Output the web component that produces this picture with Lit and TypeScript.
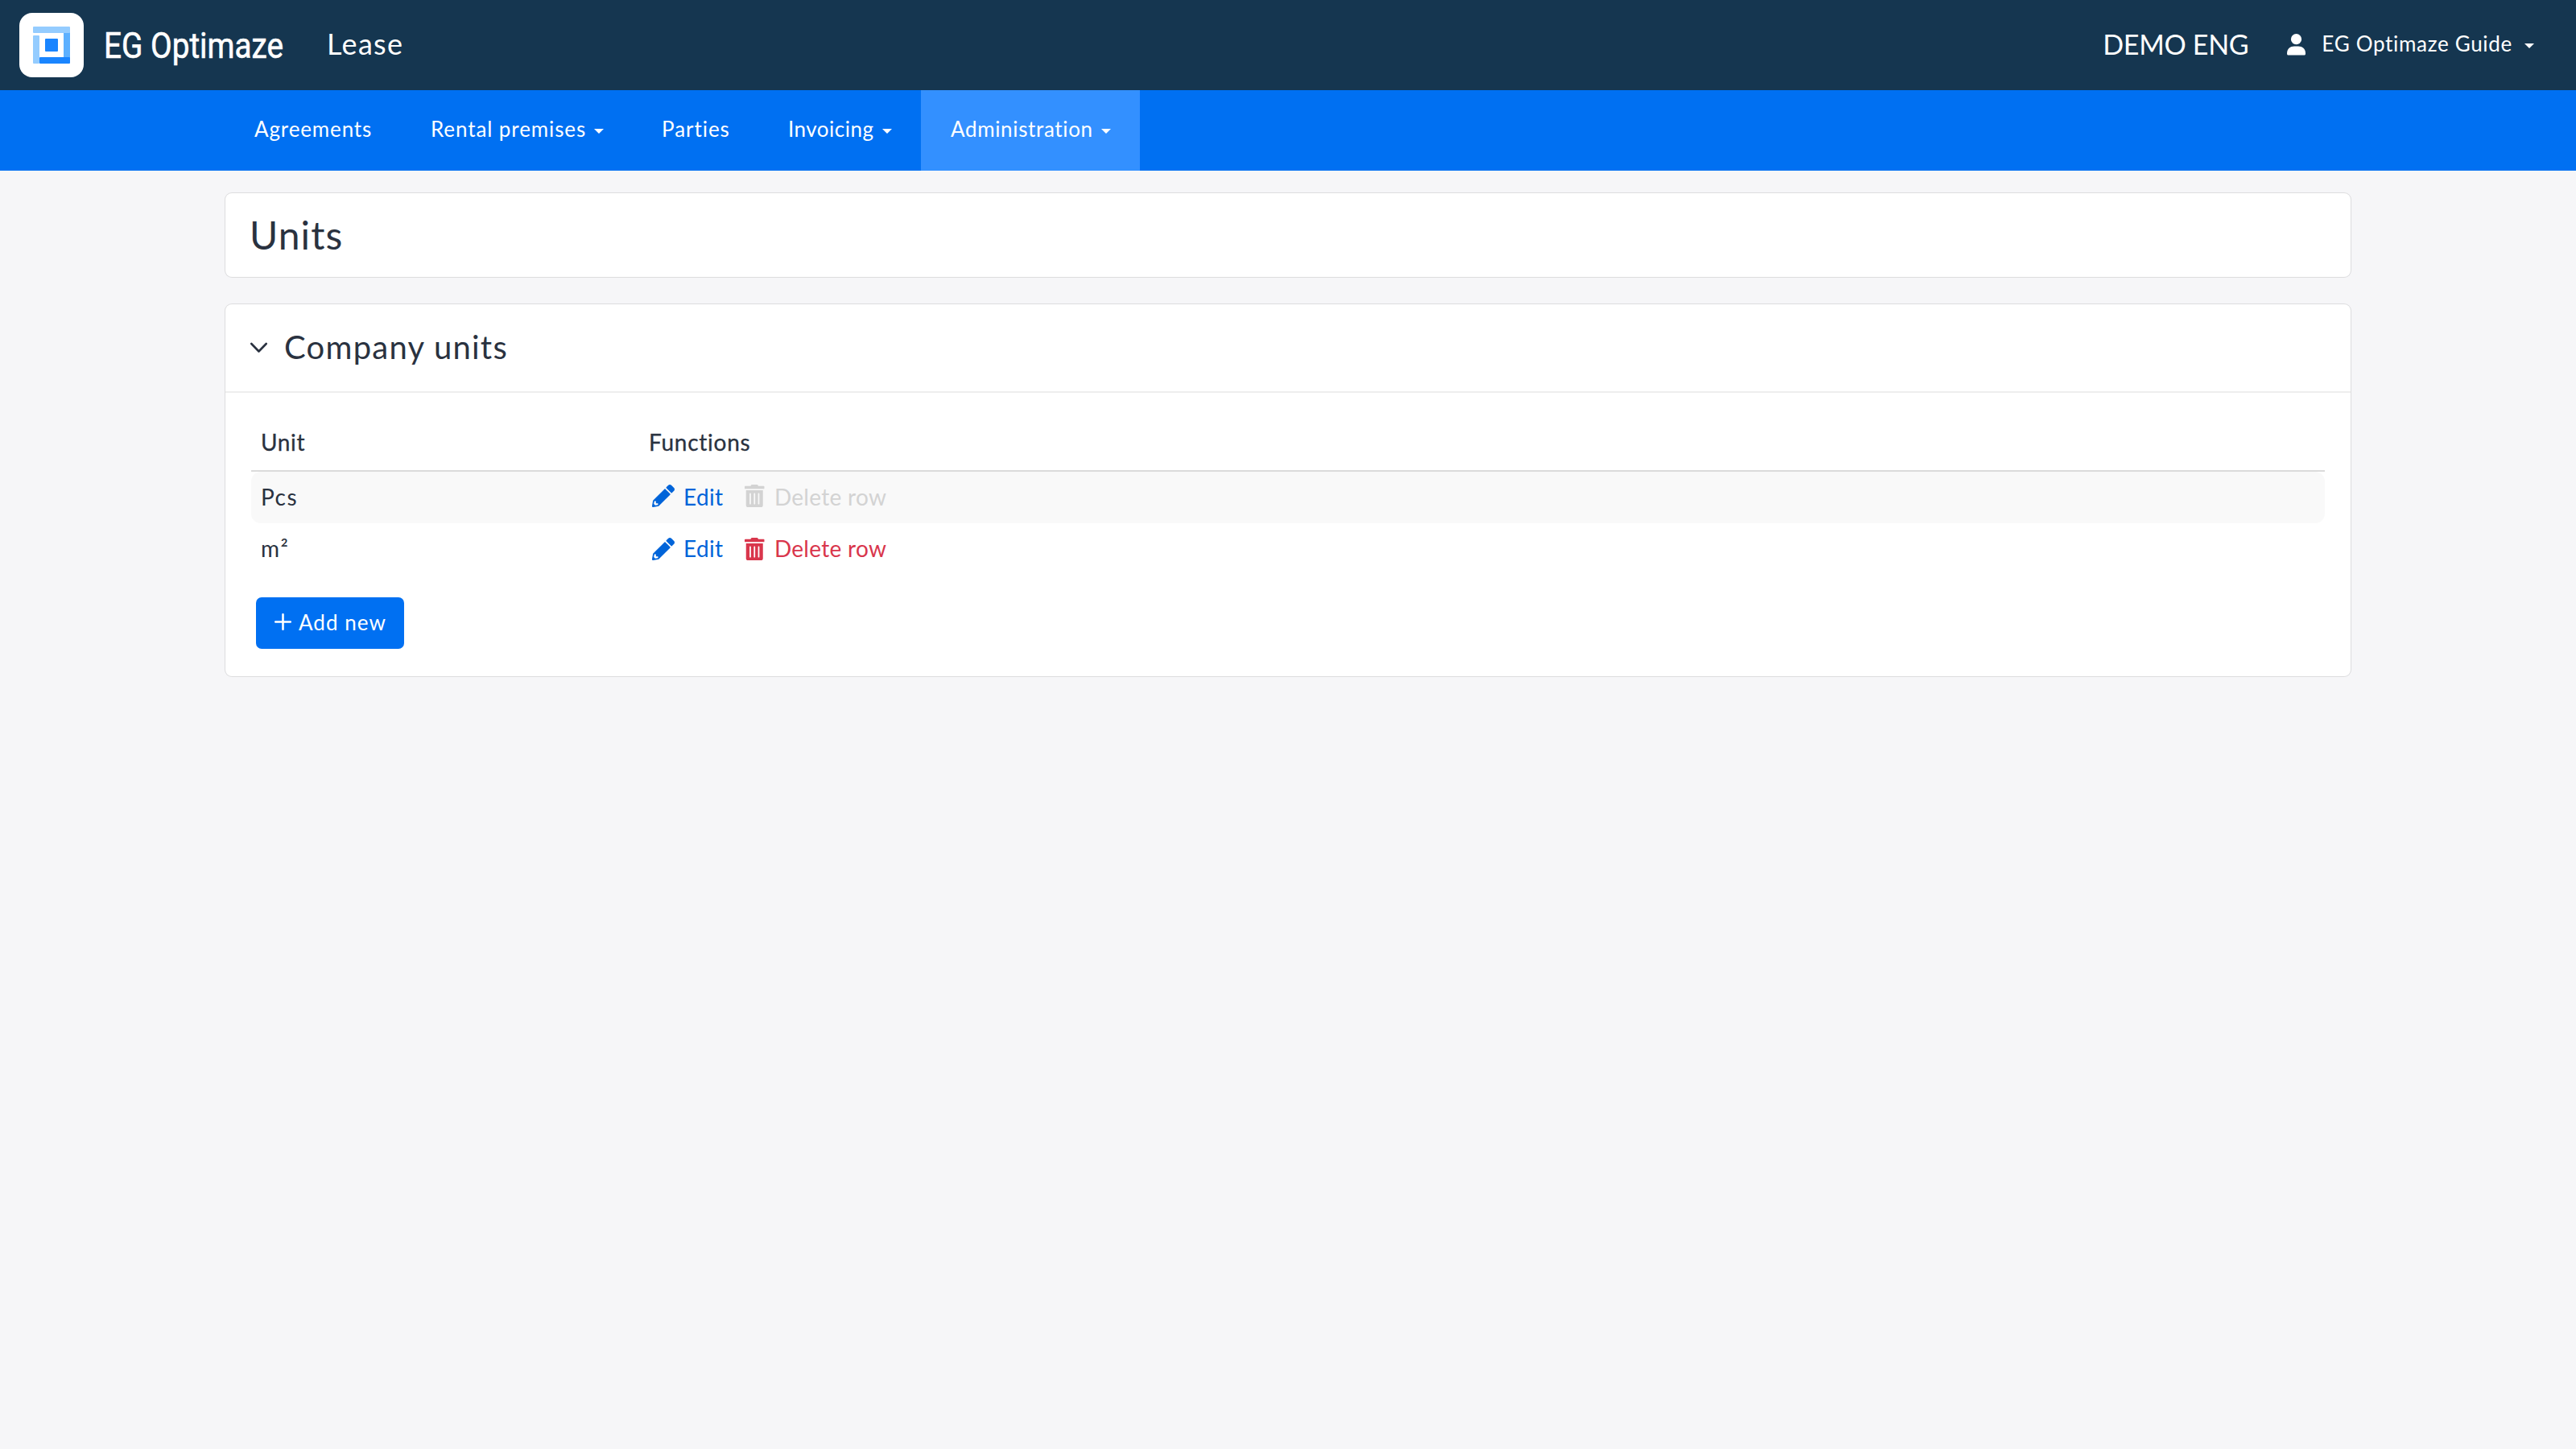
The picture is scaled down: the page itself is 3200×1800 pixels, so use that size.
import { LitElement, html, css, svg, nothing } from "lit";
import { customElement, property, state } from "lit/decorators.js";
import { classMap } from "lit/directives/class-map.js";

interface NavItem {
  id: string;
  label: string;
  menu?: boolean;
  active?: boolean;
}

interface Unit {
  name: string;
  deletable: boolean;
}

const NAV: NavItem[] = [
  { id: "agreements", label: "Agreements" },
  { id: "premises", label: "Rental premises", menu: true },
  { id: "parties", label: "Parties" },
  { id: "invoicing", label: "Invoicing", menu: true },
  { id: "administration", label: "Administration", menu: true, active: true },
];

const UNITS: Unit[] = [
  { name: "Pcs", deletable: false },
  { name: "m²", deletable: true },
];

const pencil = svg`<path fill="currentColor" d="M497.9 142.1l-46.1 46.1c-4.7 4.7-12.3 4.7-17 0l-111-111c-4.7-4.7-4.7-12.3 0-17l46.1-46.1c18.7-18.7 49.1-18.7 67.9 0l60.1 60.1c18.8 18.7 18.8 49.1 0 67.9zM284.2 99.8L21.6 362.4.4 483.9c-2.9 16.4 11.4 30.6 27.8 27.8l121.5-21.3 262.6-262.6c4.7-4.7 4.7-12.3 0-17l-111-111c-4.8-4.7-12.4-4.7-17.1 0zM88 424h48v36.3l-64.5 11.3-31.1-31.1L51.7 376H88v48z"/>`;

const trash = svg`<path fill="currentColor" d="M32 464a48 48 0 0 0 48 48h288a48 48 0 0 0 48-48V128H32zm272-256a16 16 0 0 1 32 0v224a16 16 0 0 1-32 0zm-96 0a16 16 0 0 1 32 0v224a16 16 0 0 1-32 0zm-96 0a16 16 0 0 1 32 0v224a16 16 0 0 1-32 0zM432 32H312l-9.4-18.7A24 24 0 0 0 281.1 0H166.8a23.72 23.72 0 0 0-21.4 13.3L136 32H16A16 16 0 0 0 0 48v32a16 16 0 0 0 16 16h416a16 16 0 0 0 16-16V48a16 16 0 0 0-16-16z"/>`;

@customElement("top-bar")
class TopBar extends LitElement {
  static styles = css`
    :host { display: block; }
    .bar {
      display: flex; align-items: center; box-sizing: border-box; height: 112px;
      padding: 0 52px 0 24px; background: #153650; color: #fff; white-space: nowrap;
    }
    svg { display: block; flex: none; }
    .wordmark {
      margin-left: 20px; overflow: visible; font-family: Roboto, "Liberation Sans", sans-serif;
      font-size: 43.5px; font-weight: 400;
    }
    .module { margin-left: 42px; padding-bottom: 2px; font-size: 36px; letter-spacing: 1.35px; }
    .company { margin-left: auto; padding-bottom: 2px; font-size: 34px; letter-spacing: -0.3px; }
    .person { margin: 0 20px 2px 48px; }
    .user { padding-bottom: 2px; font-size: 26px; letter-spacing: 0.7px; }
    .caret {
      margin: 2px 0 0 15px; border: 6px solid transparent;
      border-top-color: #fff; border-bottom: 0;
    }
  `;
  render() {
    return html`
      <header class="bar">
        <svg width="80" height="80" viewBox="0 0 80 80">
          <rect width="80" height="80" rx="16" fill="#fff" />
          <rect x="17" y="28" width="8" height="35" rx="1" fill="#94ccff" />
          <rect x="55" y="24" width="8" height="32" fill="#5cb0ff" />
          <rect x="17" y="17" width="46" height="8" rx="1" fill="#94ccff" />
          <rect x="25" y="55" width="38" height="8" rx="1" fill="#1a85ff" />
          <rect x="32" y="32" width="16" height="16" rx="1" fill="#1a85ff" />
        </svg>
        <svg class="wordmark" width="240" height="80" viewBox="0 0 240 80">
          <text x="5" y="56" textLength="223" lengthAdjust="spacingAndGlyphs" fill="#fff" stroke="#fff" stroke-width=".6">EG Optimaze</text>
        </svg>
        <span class="module">Lease</span>
        <span class="company">DEMO ENG</span>
        <svg class="person" width="23" height="27" viewBox="0 0 23 27">
          <circle cx="11.5" cy="6.7" r="6.6" fill="#fff" />
          <path fill="#fff" d="M0 24.500C0 18.500 4 15.600 9 15.600h5c5 0 9 2.900 9 8.900 0 1.400-.6 2-1.800 2H1.800C.6 26.500 0 25.900 0 24.500z" />
        </svg>
        <span class="user">EG Optimaze Guide</span>
        <i class="caret"></i>
      </header>
    `;
  }
}

@customElement("nav-bar")
class NavBar extends LitElement {
  static styles = css`
    :host { display: block; }
    .bar {
      display: grid; grid-template-columns: 219px 287px 157px 201px 272px; height: 100px;
      padding-left: 280px; background: #0070f2; color: #fff; font-size: 26px;
    }
    .item { display: flex; align-items: center; padding-left: 36px; white-space: nowrap; }
    .active { background: #3390ff; }
    .label { padding-bottom: 2px; }
    .agreements { letter-spacing: 0.86px; }
    .premises { letter-spacing: 0.9px; }
    .parties { letter-spacing: 0.95px; }
    .invoicing { letter-spacing: 0.5px; }
    .administration { padding-left: 1px; letter-spacing: 0.65px; }
    .caret {
      margin: 2px 0 0 10px; border: 6px solid transparent;
      border-top-color: #fff; border-bottom: 0;
    }
  `;
  @property({ attribute: false }) items: NavItem[] = [];
  render() {
    return html`
      <nav class="bar">
        ${this.items.map(
          (item) => html`
            <a class=${classMap({ item: true, active: !!item.active })}
              ><span class="label ${item.id}">${item.label}</span>${item.menu ? html`<i class="caret"></i>` : nothing}</a>
          `,
        )}
      </nav>
    `;
  }
}

@customElement("units-table")
class UnitsTable extends LitElement {
  static styles = css`
    :host { display: block; font-size: 28px; }
    .row {
      display: grid; grid-template-columns: 482px 1fr; align-items: center;
      box-sizing: border-box; height: 64px; padding: 0 0 0 12px; white-space: nowrap;
    }
    .head { height: 66px; padding-bottom: 5px; border-bottom: 2px solid #dbdbdb; }
    .unit { letter-spacing: 0.66px; -webkit-text-stroke: 0.3px currentColor; }
    .functions { letter-spacing: 0.73px; -webkit-text-stroke: 0.3px currentColor; }
    .striped { background: #f9f9f9; border-radius: 12px; }
    .name { letter-spacing: 1.5px; }
    .actions { display: flex; align-items: center; padding-left: 4px; }
    .action { display: flex; align-items: center; }
    .icon { display: block; margin-top: -1px; }
    .striped .icon { margin-top: -4px; }
    .edit { color: #0064d9; letter-spacing: 0.34px; }
    .edit .text { margin-left: 11px; }
    .delete { margin-left: 27px; color: #d9364c; letter-spacing: 0.29px; }
    .delete .text { margin-left: 12px; }
    .disabled { color: #d3d3d3; }
  `;
  @property({ attribute: false }) units: Unit[] = [];
  render() {
    return html`
      <div class="row head"><span class="unit">Unit</span><span class="functions">Functions</span></div>
      ${this.units.map(
        (unit, index) => html`
          <div class=${classMap({ row: true, striped: index % 2 === 0 })}>
            <span class="name">${unit.name}</span>
            <div class="actions">
              <a class="action edit">
                <svg class="icon" width="28" height="28" viewBox="0 0 512 512">${pencil}</svg>
                <span class="text">Edit</span>
              </a>
              <a class=${classMap({ action: true, delete: true, disabled: !unit.deletable })}>
                <svg class="icon" width="24.5" height="28" viewBox="0 0 448 512">${trash}</svg>
                <span class="text">Delete row</span>
              </a>
            </div>
          </div>
        `,
      )}
    `;
  }
}

@customElement("app-root")
class AppRoot extends LitElement {
  static styles = css`
    :host {
      display: block; min-height: 100vh; background: #f6f6f8; color: #2a3240;
      font-family: Lato, "Liberation Sans", sans-serif; line-height: 1.2;
    }
    .page { display: flex; flex-direction: column; gap: 34px; padding: 28px 280px 0; }
    .card {
      background: #fff; border-radius: 8px;
      box-shadow: 0 0 0 1px rgba(0, 0, 0, 0.09), 0 0 2px rgba(0, 0, 0, 0.06);
    }
    .title {
      display: flex; align-items: center; box-sizing: border-box; height: 104px;
      margin: 0; padding: 0 30px; font-size: 48px; font-weight: 400; letter-spacing: 1.1px;
    }
    .section {
      display: flex; align-items: center; box-sizing: border-box; height: 110px;
      padding: 0 31px; border-bottom: 2px solid #eee;
    }
    .chevron { display: block; margin-bottom: 1px; }
    .heading { margin: 0 0 0 21px; padding-bottom: 3px; font-size: 40px; font-weight: 400; letter-spacing: 1.25px; }
    .body { box-sizing: border-box; height: 352px; padding: 32px 32px 0; }
    .add {
      display: flex; align-items: center; box-sizing: border-box; width: 184px; height: 64px;
      margin: 28px 0 0 6px; padding: 0 0 0 23px; border: 0; border-radius: 7px;
      background: #0070f2; color: #fff; font: inherit; font-size: 26px; letter-spacing: 1.05px;
      white-space: nowrap;
    }
    .plus { display: block; flex: none; margin: 0 9px 3px 0; }
  `;
  @state() private units = UNITS;
  render() {
    return html`
      <top-bar></top-bar>
      <nav-bar .items=${NAV}></nav-bar>
      <main class="page">
        <section class="card"><h1 class="title">Units</h1></section>
        <section class="card">
          <div class="section">
            <svg class="chevron" width="21" height="14" viewBox="0 0 21 14">
              <path d="M1.300 2L10.500 11.500 19.700 2" fill="none" stroke="#2a3240" stroke-width="2.600" stroke-linecap="round" stroke-linejoin="round" />
            </svg>
            <h2 class="heading">Company units</h2>
          </div>
          <div class="body">
            <units-table .units=${this.units}></units-table>
            <button class="add">
              <svg class="plus" width="21" height="21" viewBox="0 0 21 21">
                <path d="M10.500 1.200v18.600M1.200 10.500h18.600" stroke="#fff" stroke-width="2.600" stroke-linecap="round" />
              </svg>
              <span>Add new</span>
            </button>
          </div>
        </section>
      </main>
    `;
  }
}
